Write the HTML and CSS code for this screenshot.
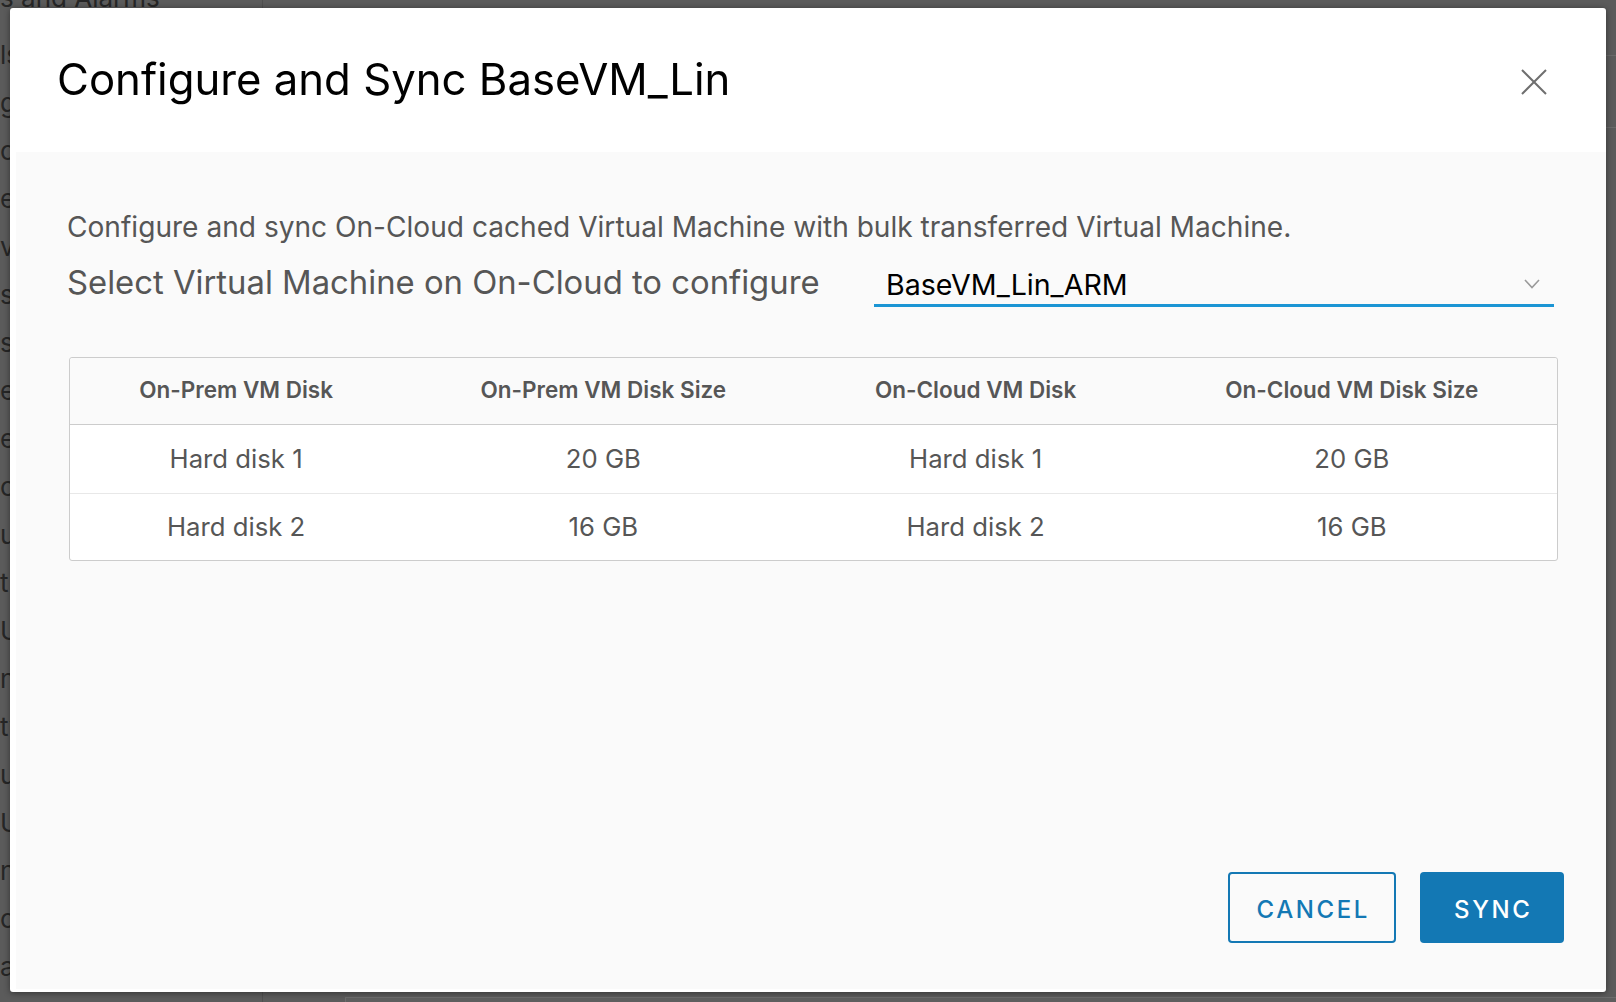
FILE: index.html
```html
<!DOCTYPE html>
<html lang="en">
<head>
<meta charset="utf-8">
<title>Configure and Sync BaseVM_Lin</title>
<link rel="stylesheet" href="styles.css">
</head>
<body>
<div class="page">
  <aside class="sidebar">
    <div class="sidebar-top">s and Alarms</div>
    <ul class="tree">
      <li>ls</li><li>g</li><li>or</li><li>e</li><li>v</li><li>s</li><li>sl</li><li>er</li><li>e</li><li>c</li>
      <li>u</li><li>t</li><li>U</li><li>n</li><li>ty</li><li>u</li><li>U</li><li>n</li><li>or</li><li>a</li>
    </ul>
  </aside>
  <main class="main">
    <div class="main-head"></div>
    <div class="main-tabs"></div>
    <div class="main-body"><div class="main-panel"></div></div>
  </main>
</div>

<div class="modal" role="dialog">
  <header class="modal-header">
    <h3 class="modal-title">Configure and Sync BaseVM_Lin</h3>
    <button class="close" aria-label="Close">
      <svg width="26" height="26" viewBox="0 0 26 26"><path d="M1 1L25 25M25 1L1 25" stroke="#6f6f6f" stroke-width="2" fill="none"/></svg>
    </button>
  </header>
  <section class="modal-body">
    <p class="desc">Configure and sync On-Cloud cached Virtual Machine with bulk transferred Virtual Machine.</p>
    <div class="select-row">
      <label class="select-label">Select Virtual Machine on On-Cloud to configure</label>
      <div class="select">
        <span class="select-value">BaseVM_Lin_ARM</span>
        <svg class="chevron" width="16" height="10" viewBox="0 0 16 10"><path d="M1 1L8 8.5L15 1" stroke="#9a9a9a" stroke-width="1.6" fill="none"/></svg>
      </div>
    </div>
    <table class="grid">
      <colgroup><col class="c1"><col class="c2"><col class="c3"><col class="c4"></colgroup>
      <thead>
        <tr><th>On-Prem VM Disk</th><th>On-Prem VM Disk Size</th><th>On-Cloud VM Disk</th><th>On-Cloud VM Disk Size</th></tr>
      </thead>
      <tbody>
        <tr><td>Hard disk 1</td><td>20 GB</td><td>Hard disk 1</td><td>20 GB</td></tr>
        <tr><td>Hard disk 2</td><td>16 GB</td><td>Hard disk 2</td><td>16 GB</td></tr>
      </tbody>
    </table>
    <footer class="modal-footer">
      <button class="btn btn-outline">CANCEL</button>
      <button class="btn btn-primary">SYNC</button>
    </footer>
  </section>
</div>
</body>
</html>
```
FILE: styles.css
```css
* { box-sizing: border-box; }
html, body { margin: 0; height: 100%; }
body {
  background: #5b5b5b;
  font-family: Inter, "Noto Sans", sans-serif;
  overflow: hidden;
}

/* dimmed page underneath the dialog */
.page { display: flex; height: 100vh; color: #262626; }
.sidebar { width: 263px; flex: none; border-right: 1px solid #4f4f4f; font-size: 26px; white-space: nowrap; }
.sidebar-top { margin-top: -17px; height: 30px; line-height: 30px; }
.tree { list-style: none; margin: 18px 0 0; padding: 0; }
.tree li { height: 48px; line-height: 48px; }
.main { flex: 1; display: flex; flex-direction: column; }
.main-head { height: 56px; border-bottom: 1px solid #6a6a6a; flex: none; }
.main-tabs { height: 72px; border-bottom: 1px solid #6a6a6a; flex: none; }
.main-body { flex: 1; display: flex; flex-direction: column; justify-content: flex-end; padding-left: 82px; }
.main-panel { height: 5px; border-top: 1px solid #6c6c6c; border-left: 1px solid #6c6c6c; background: #5e5e5e; }

/* dialog */
.modal {
  position: fixed;
  left: 10px; top: 8px;
  width: 1596px; height: 984px;
  background: #fff;
  border-radius: 3px;
  box-shadow: 0 1px 6px rgba(0,0,0,0.45);
  display: flex; flex-direction: column;
}
.modal-header {
  height: 144px; flex: none;
  display: flex; align-items: flex-start; justify-content: space-between;
  padding: 0 59px 0 47px;
}
.modal-title {
  margin: 0; padding-top: 42px;
  font-weight: 400; font-size: 43.7px; line-height: 60px; color: #000;
}
.close { margin-top: 61px; background: none; border: 0; padding: 0; width: 26px; height: 26px; }
.close svg { display: block; }

.modal-body {
  flex: 1; background: #fafafa;
  display: flex; flex-direction: column;
  margin: 0 0 3px 6px;
  padding: 55px 48px 46px 51px;
}
.desc { margin: 0; font-size: 28.1px; line-height: 40px; color: #565656; }
.select-row { display: flex; align-items: flex-start; margin-top: 13px; }
.select-label { font-size: 32.8px; line-height: 44px; color: #565656; width: 807px; flex: none; }
.select {
  width: 680px; height: 47px;
  border-bottom: 3px solid #1b95d4;
  display: flex; align-items: center; justify-content: space-between;
  padding: 5px 14px 0 12px;
}
.select-value { font-size: 28.6px; color: #000; }
.chevron { display: block; margin-bottom: 1px; }

.grid {
  margin: 50px 0 0 2px; width: 1489px;
  border-collapse: separate; border-spacing: 0;
  border: 1px solid #ccc; border-radius: 3px;
  background: #fff; color: #565656;
  table-layout: fixed;
}
.c1 { width: 332px; } .c2 { width: 402px; } .c3 { width: 342px; } .c4 { width: 410px; }
.grid th {
  height: 67px; padding: 0 0 3px;
  font-size: 22.5px; font-weight: 600; text-align: center;
  border-bottom: 1px solid #ccc; background: #fafafa;
}
.grid th:first-child { border-top-left-radius: 3px; }
.grid th:last-child { border-top-right-radius: 3px; }
.grid td { height: 68px; padding: 0 0 1px; font-size: 25.7px; text-align: center; }
.grid tbody tr + tr td { height: 67px; border-top: 1px solid #e8e8e8; }

.modal-footer { margin-top: auto; display: flex; justify-content: flex-end; gap: 24px; margin-right: -6px; }
.btn {
  height: 71px; border-radius: 4px; font-family: inherit;
  font-size: 24px; letter-spacing: 2.6px; font-weight: 500; padding: 3px 0 0 2.6px;
}
.btn-outline { width: 168px; background: transparent; border: 2px solid #1378b4; color: #1378b4; }
.btn-primary { width: 144px; background: #1378b4; border: 0; color: #fff; }
```
